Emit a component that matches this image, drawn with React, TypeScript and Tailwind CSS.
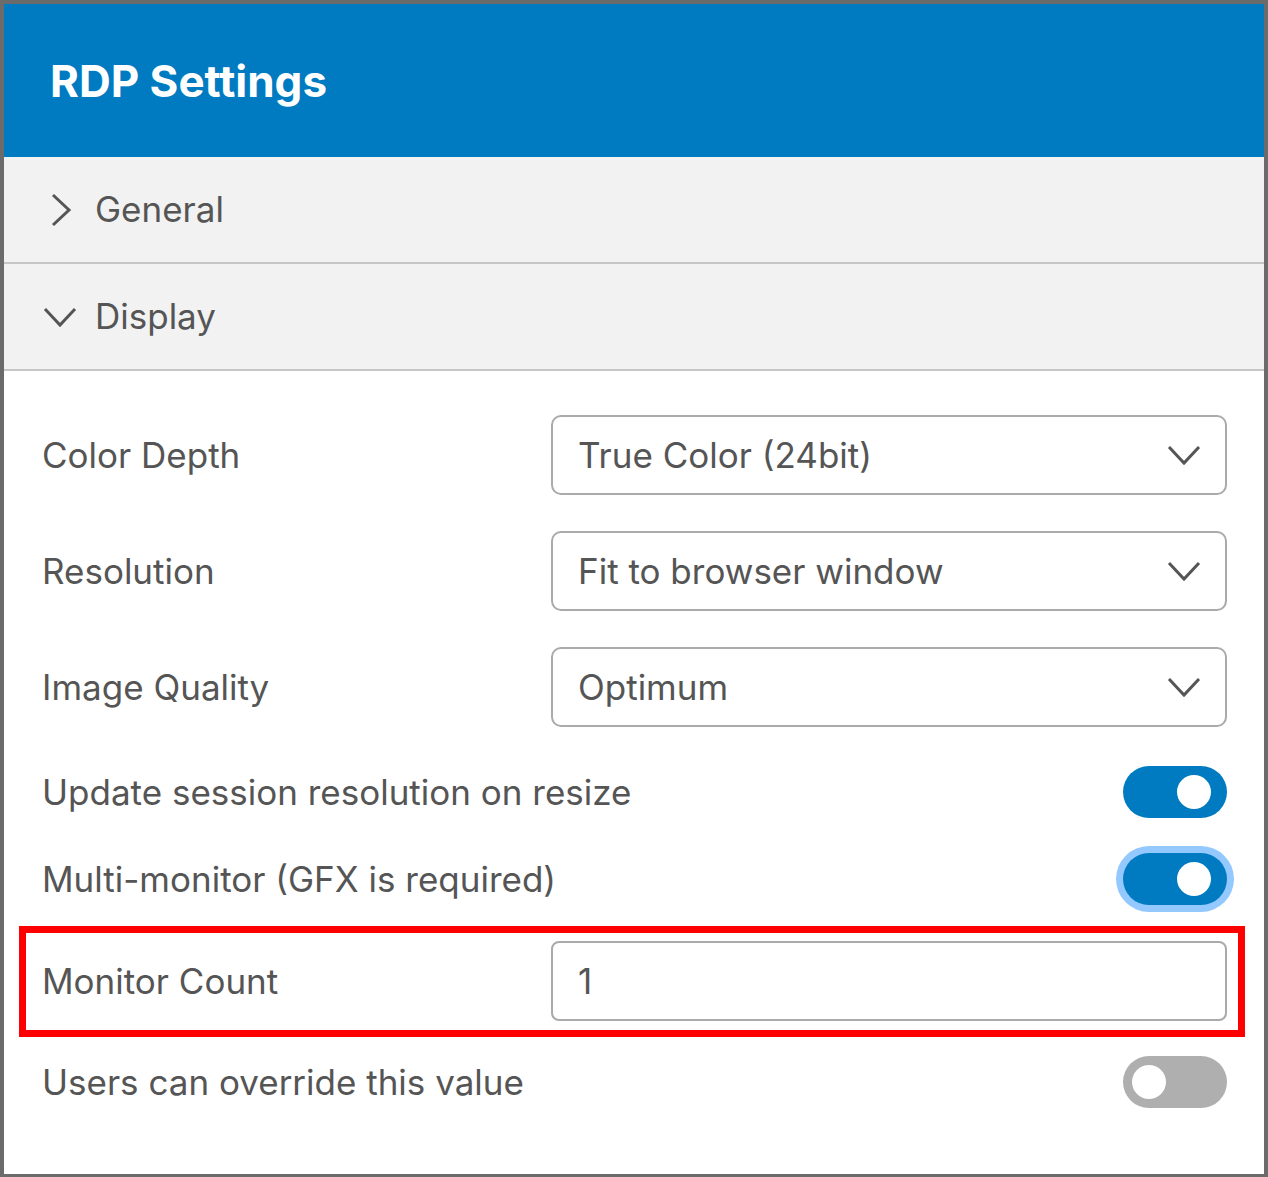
import React from "react";

const Chevron = ({ dir, className }: { dir: "right" | "down"; className?: string }) =>
  dir === "right" ? (
    <svg width="22" height="34" viewBox="0 0 22 34" className={className}>
      <polyline points="3,2 19,17 3,32" fill="none" stroke="#555" strokeWidth="3" />
    </svg>
  ) : (
    <svg width="34" height="22" viewBox="0 0 34 22" className={className}>
      <polyline points="2,3 17,19 32,3" fill="none" stroke="#555" strokeWidth="3" />
    </svg>
  );

const Select = ({ value }: { value: string }) => (
  <div className="flex-1 h-[80px] border-2 border-[#aaaaaa] rounded-[10px] flex items-center justify-between pl-[25px] pr-[24px] text-[35px] text-[#555]">
    <span>{value}</span>
    <Chevron dir="down" />
  </div>
);

const Toggle = ({ on, focus }: { on: boolean; focus?: boolean }) => (
  <div
    className={`w-[104px] h-[52px] rounded-full flex items-center ${
      on ? "bg-[#007bc1] justify-end pr-[16px]" : "bg-[#afafaf] justify-start pl-[9px]"
    } ${focus ? "ring-[7px] ring-[#93c9ff]" : ""}`}
  >
    <div className="w-[34px] h-[34px] rounded-full bg-white" />
  </div>
);

export default function App() {
  return (
    <div
      className="w-[1268px] h-[1177px] border-t-4 border-l-4 border-r-4 border-b-[3px] border-[#6b6b6b] bg-white flex flex-col text-[#555]"
      style={{ fontFamily: "Inter, 'Noto Sans', sans-serif" }}
    >
      <div className="h-[153px] bg-[#007bc1] flex items-center pl-[46px]">
        <h1 className="text-white text-[44px] font-bold">RDP Settings</h1>
      </div>

      <div className="h-[107px] bg-[#f2f2f2] border-b-2 border-[#c6c6c6] flex items-center pl-[46px] text-[35px]">
        <Chevron dir="right" />
        <span className="ml-[23px]">General</span>
      </div>
      <div className="h-[107px] bg-[#f2f2f2] border-b-2 border-[#c6c6c6] flex items-center pl-[39px] text-[35px]">
        <Chevron dir="down" />
        <span className="ml-[18px]">Display</span>
      </div>

      <div className="flex flex-col pt-[44px] pl-[38px] pr-[37px] text-[35px]">
        <div className="flex items-center">
          <div className="w-[509px]">Color Depth</div>
          <Select value="True Color (24bit)" />
        </div>
        <div className="flex items-center mt-[36px]">
          <div className="w-[509px]">Resolution</div>
          <Select value="Fit to browser window" />
        </div>
        <div className="flex items-center mt-[36px]">
          <div className="w-[509px]">Image Quality</div>
          <Select value="Optimum" />
        </div>
        <div className="flex items-center justify-between h-[52px] mt-[39px]">
          <div>Update session resolution on resize</div>
          <Toggle on />
        </div>
        <div className="flex items-center justify-between h-[52px] mt-[35px]">
          <div>Multi-monitor (GFX is required)</div>
          <Toggle on focus />
        </div>
        <div className="relative flex items-center mt-[36px]">
          <div className="w-[509px]">Monitor Count</div>
          <div className="flex-1 h-[80px] border-2 border-[#aaaaaa] rounded-[8px] flex items-center pl-[25px]">
            1
          </div>
          <div className="absolute left-[-23px] right-[-18px] top-[-15px] bottom-[-16px] border-[7px] border-[#ff0000] pointer-events-none" />
        </div>
        <div className="flex items-center justify-between h-[52px] mt-[35px]">
          <div>Users can override this value</div>
          <Toggle on={false} />
        </div>
      </div>
    </div>
  );
}
